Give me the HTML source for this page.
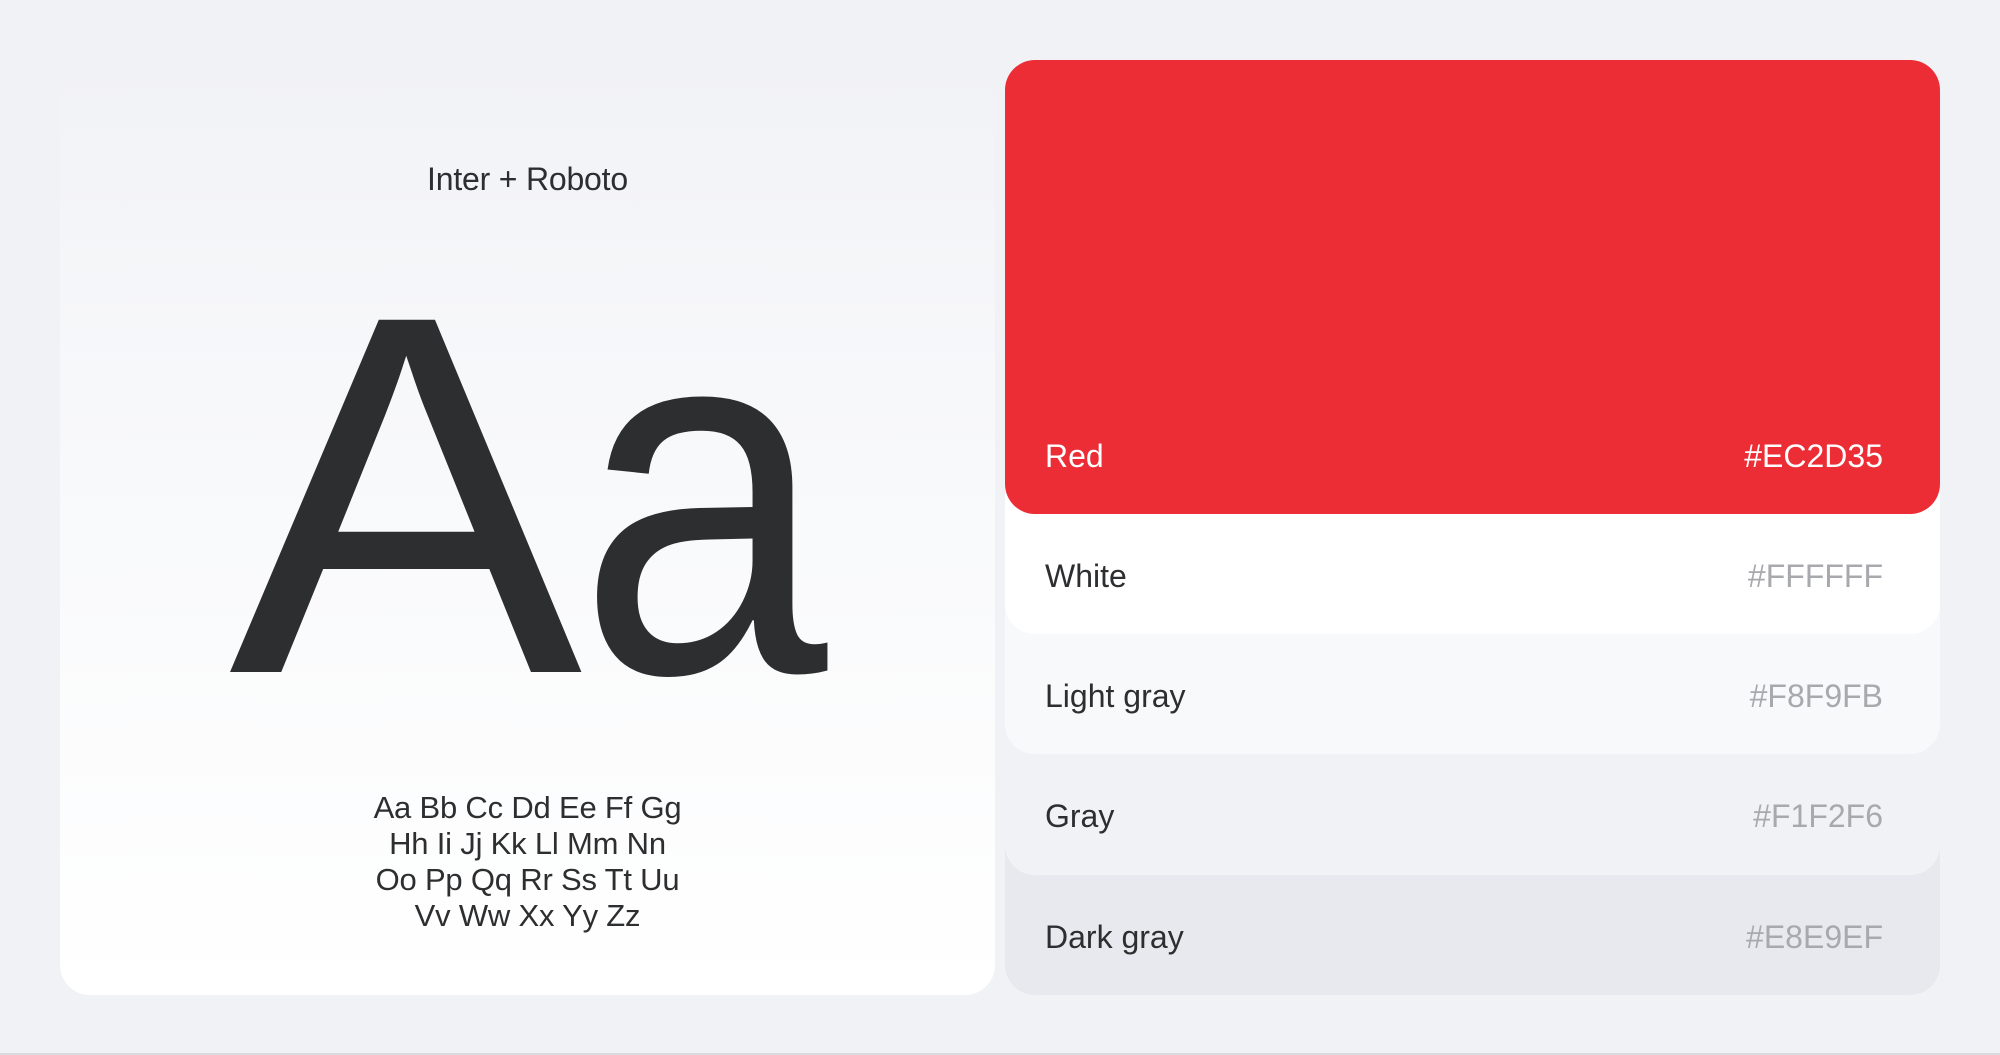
<!DOCTYPE html>
<html><head><meta charset="utf-8"><style>
*{margin:0;padding:0;box-sizing:border-box}
body{width:2000px;height:1055px;background:#f1f2f6;position:relative;overflow:hidden;font-family:"Liberation Sans",sans-serif;color:#2d2e30}
.left{position:absolute;left:60px;top:60px;width:935px;height:935px;border-radius:30px;background:linear-gradient(#f1f2f6 0%,#f7f8fa 35%,#ffffff 100%)}
.title{position:absolute;left:0;width:935px;top:101px;text-align:center;font-size:32px;letter-spacing:-0.2px}
.big{position:absolute;font-size:512px;line-height:1;color:#2d2e30}
.alpha{position:absolute;left:0;width:935px;top:730px;text-align:center;font-size:31px;line-height:36px;letter-spacing:-0.2px}
.row{position:absolute;left:1005px;width:935px;border-radius:0 0 30px 30px;font-size:32px}
.row .l{position:absolute;left:40px}
.row .r{position:absolute;right:57px;color:#a8a9ac}
.bot{position:absolute;left:0;top:1053px;width:2000px;height:2px;background:#d9dadd}
</style></head><body>
<div class="left">
  <div class="title">Inter + Roboto</div>
  <div class="big" style="left:169px;top:179px;transform:scaleX(1.035);transform-origin:left">A</div>
  <div class="big" style="left:518px;top:179px;transform:scaleX(0.876);transform-origin:left">a</div>
  <div class="alpha">Aa Bb Cc Dd Ee Ff Gg<br>Hh Ii Jj Kk Ll Mm Nn<br>Oo Pp Qq Rr Ss Tt Uu<br>Vv Ww Xx Yy Zz</div>
</div>
<div class="row" style="top:846px;height:149px;background:#e8e9ef;z-index:1"><span class="l" style="top:73px">Dark gray</span><span class="r" style="top:73px">#E8E9EF</span></div>
<div class="row" style="top:724px;height:151px;background:#f1f2f6;z-index:2"><span class="l" style="top:74px">Gray</span><span class="r" style="top:74px">#F1F2F6</span></div>
<div class="row" style="top:604px;height:150px;background:#f8f9fb;z-index:3"><span class="l" style="top:74px">Light gray</span><span class="r" style="top:74px">#F8F9FB</span></div>
<div class="row" style="top:484px;height:150px;background:#ffffff;z-index:4"><span class="l" style="top:74px">White</span><span class="r" style="top:74px">#FFFFFF</span></div>
<div class="row" style="top:60px;height:454px;background:#ec2d35;border-radius:30px;z-index:5;color:#fff"><span class="l" style="top:378px">Red</span><span class="r" style="top:378px;color:#fff">#EC2D35</span></div>
<div class="bot"></div>
</body></html>
